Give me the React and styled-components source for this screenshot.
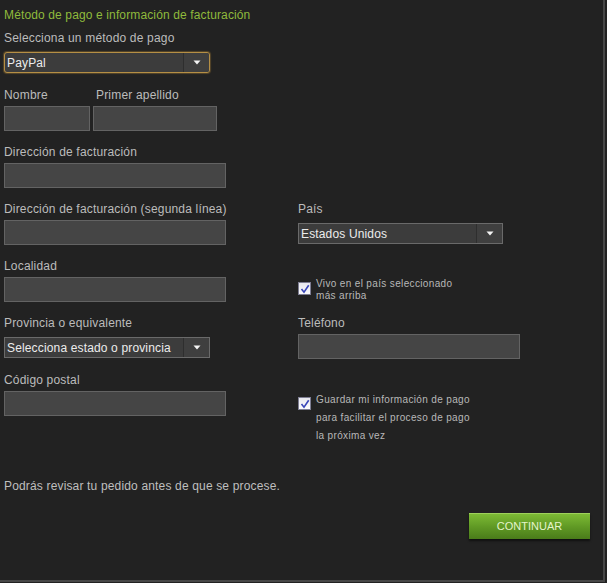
import React from "react";
import styled, { createGlobalStyle } from "styled-components";

const Global = createGlobalStyle`
  html, body { margin: 0; padding: 0; background: #222222; }
  body { font-family: "Liberation Sans", Arial, sans-serif; }
  * { box-sizing: border-box; }
`;

const Page = styled.div`
  width: 605px;
  height: 582px;
  padding: 7px 0 0 4px;
  background: #222222;
  border-right: 2px solid #474747;
  border-bottom: 2px solid #474747;
  font-family: "Liberation Sans", Arial, sans-serif;
`;

const Title = styled.div`
  color: #8fba3c;
  font-size: 12px;
  line-height: 16px;
  letter-spacing: 0.13px;
  margin-bottom: 7px;
`;

const Label = styled.div`
  color: #bcbcbc;
  font-size: 12px;
  line-height: 16px;
  letter-spacing: 0.18px;
  white-space: nowrap;
  padding-left: ${(p) => p.$indent || 0}px;
`;

const Field = styled.div`
  width: ${(p) => p.$width}px;
`;

const TextInput = styled.input`
  display: block;
  width: ${(p) => p.$width}px;
  height: 25px;
  margin: 3px 0 13px;
  background: #454545;
  border: 1px solid #636363;
  color: #ddd;
  outline: none;
`;

const SelectBox = styled.div`
  display: flex;
  width: ${(p) => p.$width}px;
  height: 21px;
  margin: 6px 0 14px;
  background: #3c3c3c;
  border: 1px solid ${(p) => (p.$focus ? "#b58f45" : "#6a6a6a")};
  border-radius: ${(p) => (p.$focus ? "3px" : "0")};
  box-shadow: ${(p) => (p.$focus ? "0 0 1px 1px rgba(150,115,50,0.45)" : "none")};
  color: #ececec;
  font-size: 12px;
  letter-spacing: 0.15px;
`;

const SelectText = styled.div`
  flex: 1;
  display: flex;
  align-items: center;
  padding-left: 2px;
  white-space: nowrap;
  overflow: hidden;
`;

const SelectArrow = styled.div`
  width: 26px;
  display: flex;
  align-items: center;
  justify-content: center;
  border-left: 1px solid #2e2e2e;
  background: #3f3f3f;
  border-radius: 0 2px 2px 0;
`;

const NameRow = styled.div`
  display: flex;
  gap: 3px;
`;

const Grid = styled.div`
  display: grid;
  grid-template-columns: 294px 1fr;
  grid-auto-rows: auto;
  align-items: start;
`;

const CheckRow = styled.div`
  display: flex;
  align-items: flex-start;
  gap: 5px;
  padding-top: ${(p) => p.$top}px;
`;

const CheckBox = styled.div`
  width: 13px;
  height: 13px;
  margin-top: ${(p) => p.$offset}px;
  flex: none;
  border: 1px solid #7d7d92;
  background: linear-gradient(#e8e8ee, #fbfbfd);
  display: flex;
  align-items: center;
  justify-content: center;
`;

const CheckText = styled.div`
  color: #b8b8b8;
  font-size: 10px;
  line-height: ${(p) => p.$lh}px;
  letter-spacing: 0.35px;
  white-space: nowrap;
`;

const Note = styled.div`
  margin-top: 33px;
  color: #bfbfbf;
  font-size: 12px;
  line-height: 16px;
  letter-spacing: 0.16px;
`;

const Footer = styled.div`
  display: flex;
  justify-content: flex-end;
  margin-top: 19px;
  padding-right: 13px;
`;

const Button = styled.button`
  width: 121px;
  height: 26px;
  border: none;
  padding: 0;
  background: linear-gradient(#7fbd36, #5f9824 55%, #4a7b1a);
  box-shadow: 0 2px 2px rgba(0, 0, 0, 0.55), inset 0 1px 0 rgba(190, 230, 130, 0.5);
  color: #e4f4cc;
  font-family: "Liberation Sans", Arial, sans-serif;
  font-size: 11px;
  cursor: pointer;
`;

const Arrow = () => (
  <svg width="8" height="5" viewBox="0 0 8 5">
    <path d="M0.5 0.5 L7.5 0.5 L4 4.5 Z" fill="#f4f4f4" />
  </svg>
);

const Tick = () => (
  <svg width="10" height="10" viewBox="0 0 10 10">
    <path d="M1.5 5 L4 8.2 L8.7 1.2" fill="none" stroke="#3946b8" strokeWidth="1.6" />
  </svg>
);

const Select = ({ width, value, focus }) => (
  <SelectBox $width={width} $focus={focus}>
    <SelectText>{value}</SelectText>
    <SelectArrow>
      <Arrow />
    </SelectArrow>
  </SelectBox>
);

const InputField = ({ label, width, indent }) => (
  <Field $width={width}>
    <Label $indent={indent}>{label}</Label>
    <TextInput $width={width} />
  </Field>
);

export default function App() {
  return (
    <>
      <Global />
      <Page>
        <Title>Método de pago e información de facturación</Title>
        <Field $width={206}>
          <Label>Selecciona un método de pago</Label>
          <Select width={206} value="PayPal" focus />
        </Field>
        <NameRow>
          <InputField label="Nombre" width={86} />
          <InputField label="Primer apellido" width={124} indent={3} />
        </NameRow>
        <Grid>
          <InputField label="Dirección de facturación" width={222} />
          <div />
          <InputField label="Dirección de facturación (segunda línea)" width={222} />
          <Field $width={205}>
            <Label>País</Label>
            <Select width={205} value="Estados Unidos" />
          </Field>
          <InputField label="Localidad" width={222} />
          <CheckRow $top={20}>
            <CheckBox $offset={4}>
              <Tick />
            </CheckBox>
            <CheckText $lh={12}>
              Vivo en el país seleccionado
              <br />
              más arriba
            </CheckText>
          </CheckRow>
          <Field $width={206}>
            <Label>Provincia o equivalente</Label>
            <Select width={206} value="Selecciona estado o provincia" />
          </Field>
          <InputField label="Teléfono" width={222} />
          <InputField label="Código postal" width={222} />
          <CheckRow $top={19}>
            <CheckBox $offset={6}>
              <Tick />
            </CheckBox>
            <CheckText $lh={18}>
              Guardar mi información de pago
              <br />
              para facilitar el proceso de pago
              <br />
              la próxima vez
            </CheckText>
          </CheckRow>
        </Grid>
        <Note>Podrás revisar tu pedido antes de que se procese.</Note>
        <Footer>
          <Button>CONTINUAR</Button>
        </Footer>
      </Page>
    </>
  );
}
